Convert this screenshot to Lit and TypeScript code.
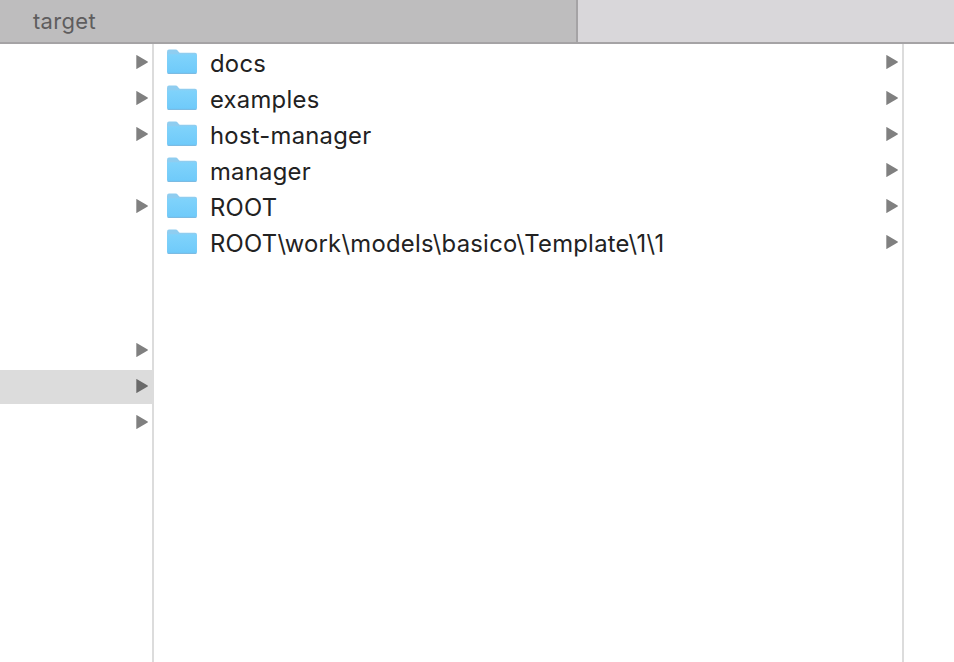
import { LitElement, html, css } from "lit";
import { customElement } from "lit/decorators.js";

const arrow = (dark = false) => html`<svg class="arrow" width="12" height="14" viewBox="0 0 12 14"><path d="M0.3 0.6 Q0.3 -.2 1 .2 L11.7 6.6 Q12 7 11.7 7.4 L1 13.8 Q0.3 14.2 0.3 13.4 Z" fill="${dark ? "#6a6a6a" : "#808080"}"/></svg>`;

const folder = html`<svg class="folder" width="32" height="28" viewBox="0 0 32 28">
  <defs><linearGradient id="fg" x1="0" y1="0" x2="0" y2="1"><stop offset="0" stop-color="#80d3fb"/><stop offset="1" stop-color="#6fcafa"/></linearGradient></defs>
  <path d="M1 5 Q1 2.6 3 2.6 H9.5 Q11 2.6 12 3.9 L13 5.2 Q13.6 5.8 15 5.8 H29 Q31 5.8 31 8 V25 Q31 26.8 29 26.8 H3 Q1 26.8 1 25 Z" fill="#8fcdf0"/>
  <path d="M1.2 8 Q1.2 7.2 2.6 7.2 H29.4 Q30.8 7.2 30.8 8.6 V24.8 Q30.8 26 29.4 26 H2.6 Q1.2 26 1.2 24.8 Z" fill="url(#fg)"/>
  <path d="M1.6 26.4 H30.4" stroke="#6aaedb" stroke-width=".8"/>
</svg>`;

const names = ["docs", "examples", "host-manager", "manager", "ROOT", "ROOT\\work\\models\\basico\\Template\\1\\1"];
const leftRows = [1, 1, 1, 0, 1, 0, 0, 0, 1, 2, 1];

@customElement("app-root")
export class AppRoot extends LitElement {
  static styles = css`
    :host { display: block; width: 954px; height: 662px; overflow: hidden; background: #fff; font-family: Inter, "Liberation Sans", Arial, sans-serif; }
    .tabs { display: flex; height: 42px; border-bottom: 2px solid #a5a3a5; }
    .tab { display: flex; align-items: center; color: #5f5d5e; font-size: 22px; letter-spacing: .3px; }
    .active { width: 578px; background: #bebdbe; padding-left: 33px; box-sizing: border-box; border-right: 2px solid #a5a3a5; }
    .inactive { flex: 1; background: #d9d7da; }
    .cols { display: flex; height: 618px; }
    .left { width: 152px; border-right: 2px solid #dcdcdc; flex: none; }
    .mid { width: 748px; border-right: 2px solid #dcdcdc; flex: none; }
    .row { height: 36px; display: flex; align-items: center; box-sizing: border-box; }
    .left .row { justify-content: flex-end; padding-right: 4px; }
    .left .row.sel { background: linear-gradient(#dcdcdc, #dcdcdc) bottom / 100% 34px no-repeat; }
    .mid .row { padding-left: 12px; padding-right: 4px; color: #222; font-size: 23.8px; letter-spacing: .27px; }
    .folder { flex: none; margin-top: -2px; }
    .name { margin-left: 12px; flex: 1; white-space: nowrap; padding-top: 2px; }
    .arrow { flex: none; }
  `;
  render() {
    return html`
      <div class="tabs">
        <div class="tab active">target</div>
        <div class="tab inactive"></div>
      </div>
      <div class="cols">
        <div class="left">
          ${leftRows.map((r) => html`<div class="row ${r === 2 ? "sel" : ""}">${r ? arrow(r === 2) : ""}</div>`)}
        </div>
        <div class="mid">
          ${names.map((n) => html`<div class="row">${folder}<span class="name">${n}</span>${arrow()}</div>`)}
        </div>
      </div>
    `;
  }
}
